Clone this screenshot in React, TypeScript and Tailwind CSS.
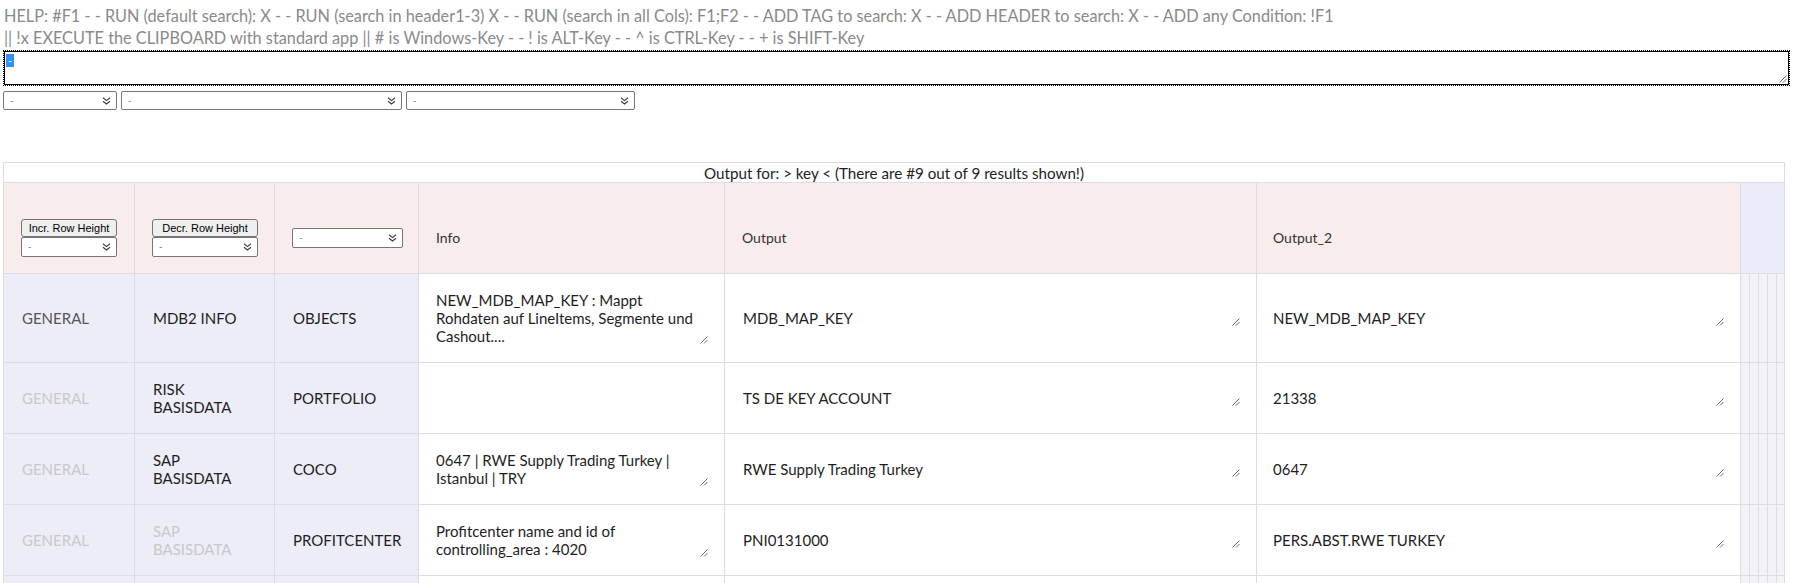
import React from 'react';

const help1 =
  'HELP: #F1 - - RUN (default search): X - - RUN (search in header1-3) X - - RUN (search in all Cols): F1;F2 - - ADD TAG to search: X - - ADD HEADER to search: X - - ADD any Condition: !F1';
const help2 =
  '|| !x EXECUTE the CLIPBOARD with standard app || # is Windows-Key - - ! is ALT-Key - - ^ is CTRL-Key - - + is SHIFT-Key';

type Row = {
  tag: string;
  tagDim: boolean;
  group: string[];
  groupDim: boolean;
  header: string;
  info: string[];
  output: string;
  output2: string;
  h: string;
};

const rows: Row[] = [
  {
    tag: 'GENERAL',
    tagDim: false,
    group: ['MDB2 INFO'],
    groupDim: false,
    header: 'OBJECTS',
    info: ['NEW_MDB_MAP_KEY : Mappt', 'Rohdaten auf LineItems, Segmente und', 'Cashout....'],
    output: 'MDB_MAP_KEY',
    output2: 'NEW_MDB_MAP_KEY',
    h: 'h-[89px]',
  },
  {
    tag: 'GENERAL',
    tagDim: true,
    group: ['RISK', 'BASISDATA'],
    groupDim: false,
    header: 'PORTFOLIO',
    info: [],
    output: 'TS DE KEY ACCOUNT',
    output2: '21338',
    h: 'h-[71px]',
  },
  {
    tag: 'GENERAL',
    tagDim: true,
    group: ['SAP', 'BASISDATA'],
    groupDim: false,
    header: 'COCO',
    info: ['0647 | RWE Supply Trading Turkey |', 'Istanbul | TRY'],
    output: 'RWE Supply Trading Turkey',
    output2: '0647',
    h: 'h-[71px]',
  },
  {
    tag: 'GENERAL',
    tagDim: true,
    group: ['SAP', 'BASISDATA'],
    groupDim: true,
    header: 'PROFITCENTER',
    info: ['Profitcenter name and id of', 'controlling_area : 4020'],
    output: 'PNI0131000',
    output2: 'PERS.ABST.RWE TURKEY',
    h: 'h-[71px]',
  },
];

function Chevrons() {
  return (
    <svg width="9" height="8" viewBox="0 0 9 8" className="shrink-0">
      <path d="M1 0.8 L4.5 3.6 L8 0.8 M1 4.2 L4.5 7 L8 4.2" fill="none" stroke="#3a3a3a" strokeWidth="1.1" />
    </svg>
  );
}

function Grip() {
  return (
    <svg width="8" height="8" viewBox="0 0 8 8" className="absolute right-0 bottom-[1px]">
      <path d="M0.5 7.5 L7.5 0.5 M4 7.5 L7.5 4" fill="none" stroke="#6b6b6b" strokeWidth="1" />
    </svg>
  );
}

function FakeSelect({ w }: { w: string }) {
  return (
    <div
      className={`${w} h-[19px] flex items-center justify-between pl-[6px] pr-[5px] bg-white border border-[#767676] rounded-[2px]`}
    >
      <span className="text-[9px] leading-none text-[#4a6fa5]">-</span>
      <Chevrons />
    </div>
  );
}

function Area({ lines }: { lines: string[] }) {
  return (
    <div className="relative pr-[10px] leading-[18px] text-[#1e1e1e]">
      {lines.map((l, i) => (
        <div key={i} className="whitespace-nowrap">
          {l}
        </div>
      ))}
      <Grip />
    </div>
  );
}

const cell = 'border border-[#dcdce6]';
const side = `${cell} bg-[#f3f3f7]`;

export default function App() {
  return (
    <div className="w-[1794px] h-[583px] overflow-hidden bg-white font-['Lato','Open_Sans',sans-serif]">
      {/* help text */}
      <div className="pl-[4px] pt-[5px] text-[16.3px] leading-[22px] text-[#8a8a8a] whitespace-nowrap">
        <div>{help1}</div>
        <div>{help2}</div>
      </div>

      {/* search box */}
      <div className="relative mt-[2px] ml-[4px] w-[1785px] h-[34px] border border-black outline-1 outline-dotted outline-black">
        <span className="absolute left-[1px] top-[2px] w-[8px] h-[13px] bg-[#3390ff] text-white text-[11px] leading-[13px] text-center">
          -
        </span>
        <svg width="8" height="8" viewBox="0 0 8 8" className="absolute right-[1px] bottom-[1px]">
          <path d="M0.5 7.5 L7.5 0.5 M4 7.5 L7.5 4" fill="none" stroke="#6b6b6b" strokeWidth="1" />
        </svg>
      </div>

      {/* filters */}
      <div className="flex gap-[4px] ml-[3px] mt-[6px]">
        <FakeSelect w="w-[114px]" />
        <FakeSelect w="w-[281px]" />
        <FakeSelect w="w-[229px]" />
      </div>

      {/* results */}
      <table className="mt-[52px] ml-[3px] w-[1781px] table-fixed border-collapse text-[15px] text-[#1e1e1e]">
        <colgroup>
          <col className="w-[131px]" />
          <col className="w-[140px]" />
          <col className="w-[144px]" />
          <col className="w-[306px]" />
          <col className="w-[532px]" />
          <col className="w-[484px]" />
          <col className="w-[9px]" />
          <col className="w-[9px]" />
          <col className="w-[9px]" />
          <col className="w-[9px]" />
          <col className="w-[8px]" />
        </colgroup>
        <tbody>
          <tr className="h-[20px]">
            <td colSpan={11} className={`${cell} text-center text-[15.2px] leading-[18px] text-[#222]`}>
              Output for: &gt; key &lt; (There are #9 out of 9 results shown!)
            </td>
          </tr>
          <tr className="h-[91px] bg-[#f9ecec] text-[14px]">
            <td className={`${cell} align-middle pt-[19px] pl-[17px]`}>
              <div className="w-[96px] flex flex-col">
                <div className="h-[18px] bg-[#efefef] border border-[#767676] rounded-[3px] text-[11px] leading-[16px] text-center text-black font-['Liberation_Sans',sans-serif]">
                  Incr. Row Height
                </div>
                <FakeSelect w="w-[96px] h-[20px]" />
              </div>
            </td>
            <td className={`${cell} align-middle pt-[19px] pl-[17px]`}>
              <div className="w-[106px] flex flex-col">
                <div className="h-[18px] bg-[#efefef] border border-[#767676] rounded-[3px] text-[11px] leading-[16px] text-center text-black font-['Liberation_Sans',sans-serif]">
                  Decr. Row Height
                </div>
                <FakeSelect w="w-[106px] h-[20px]" />
              </div>
            </td>
            <td className={`${cell} align-middle pt-[19px] pl-[17px]`}>
              <FakeSelect w="w-[111px] h-[20px]" />
            </td>
            <td className={`${cell} align-middle pt-[19px] pl-[17px] text-[#333]`}>Info</td>
            <td className={`${cell} align-middle pt-[19px] pl-[17px] text-[#333]`}>Output</td>
            <td className={`${cell} align-middle pt-[19px] pl-[16px] text-[#333]`}>Output_2</td>
            <td colSpan={5} className={`${cell} bg-[#eaecf9]`} />
          </tr>
          {rows.map((r, i) => (
            <tr key={i} className={r.h}>
              <td
                className={`${cell} bg-[#ededf8] pl-[18px] align-middle ${
                  r.tagDim ? 'text-[#c8c8cc]' : 'text-[#555]'
                }`}
              >
                {r.tag}
              </td>
              <td
                className={`${cell} bg-[#ededf8] pl-[18px] align-middle leading-[18px] ${
                  r.groupDim ? 'text-[#c8c8cc]' : 'text-[#1e1e1e]'
                }`}
              >
                {r.group.map((g, j) => (
                  <div key={j}>{g}</div>
                ))}
              </td>
              <td className={`${cell} bg-[#ededf8] pl-[18px] align-middle`}>{r.header}</td>
              <td className={`${cell} bg-white pr-[16px] pl-[17px] align-middle`}>
                {r.info.length > 0 && <Area lines={r.info} />}
              </td>
              <td className={`${cell} bg-white pr-[16px] pl-[18px] align-middle`}>
                <Area lines={[r.output]} />
              </td>
              <td className={`${cell} bg-white px-[16px] align-middle`}>
                <Area lines={[r.output2]} />
              </td>
              <td className={side} />
              <td className={side} />
              <td className={side} />
              <td className={side} />
              <td className={side} />
            </tr>
          ))}
          <tr className="h-[71px]">
            <td className={`${cell} bg-[#ededf8]`} />
            <td className={`${cell} bg-[#ededf8]`} />
            <td className={`${cell} bg-[#ededf8]`} />
            <td className={`${cell} bg-white`} />
            <td className={`${cell} bg-white`} />
            <td className={`${cell} bg-white`} />
            <td className={side} />
            <td className={side} />
            <td className={side} />
            <td className={side} />
            <td className={side} />
          </tr>
        </tbody>
      </table>
    </div>
  );
}
